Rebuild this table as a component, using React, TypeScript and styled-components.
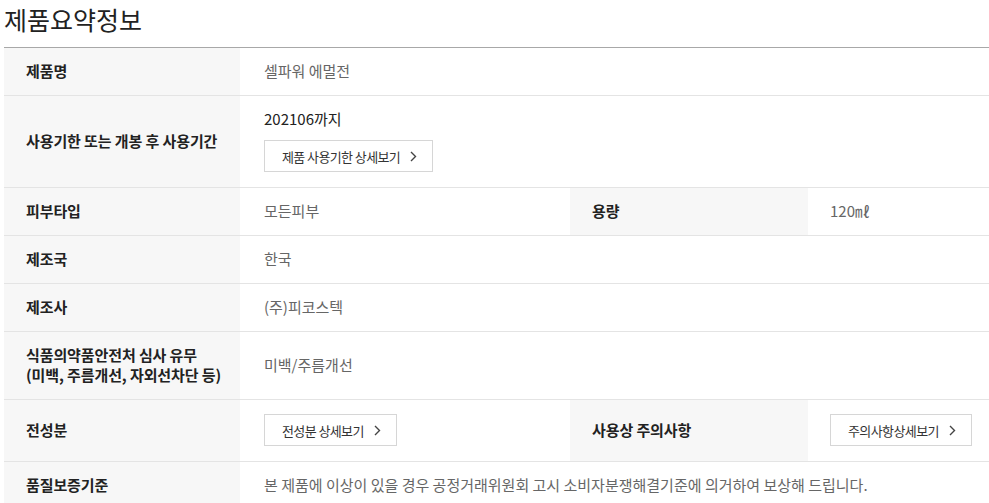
import { createGlobalStyle, styled } from "styled-components"

const GlobalStyle = createGlobalStyle`
  html, body {
    margin: 0;
    padding: 0;
    background: #fff;
  }
  body {
    font-family: "Noto Sans CJK KR", "Noto Sans", sans-serif;
    color: #222;
  }
`

const Page = styled.div`
  padding-left: 4px;
  width: 985px;
`

const Title = styled.h2`
  margin: 0;
  height: 47px;
  font-size: 25px;
  line-height: 38px;
  font-weight: 400;
  color: #222;
`

const Table = styled.table`
  width: 100%;
  border-collapse: collapse;
  table-layout: fixed;
  border-top: 1px solid #a8a8a8;
`

const Row = styled.tr`
  border-bottom: 1px solid #e4e4e4;
`

const Label = styled.th`
  background: #f7f7f7;
  text-align: left;
  vertical-align: middle;
  padding: 13px 10px 14px 22px;
  font-size: 15px;
  line-height: 20px;
  font-weight: 700;
  color: #222;
  letter-spacing: -0.1px;
`

const Value = styled.td<{ $inset?: number }>`
  vertical-align: middle;
  padding: 13px 10px 14px ${(p) => p.$inset ?? 24}px;
  font-size: 15px;
  line-height: 20px;
  color: #666;
`

const Stack = styled.div`
  display: flex;
  flex-direction: column;
  align-items: flex-start;
  gap: 10px;
  color: #222;
`

const DetailButton = styled.button`
  display: inline-flex;
  align-items: center;
  gap: 10px;
  height: 32px;
  margin: 1px 0;
  padding: 0 15px 0 17px;
  border: 1px solid #d6d6d6;
  background: #fff;
  font-family: inherit;
  font-size: 13px;
  color: #333;
  letter-spacing: -0.6px;
  cursor: pointer;

  svg {
    display: block;
  }
`

const Chevron = () => (
  <svg width="7" height="11" viewBox="0 0 7 11">
    <polyline points="1,1 5.5,5.5 1,10" fill="none" stroke="#444" strokeWidth="1.4" />
  </svg>
)

const MoreButton = ({ children }: { children: string }) => (
  <DetailButton type="button">
    {children}
    <Chevron />
  </DetailButton>
)

const App = () => (
  <>
    <GlobalStyle />
    <Page>
      <Title>제품요약정보</Title>
      <Table>
        <colgroup>
          <col style={{ width: 236 }} />
          <col style={{ width: 330 }} />
          <col style={{ width: 238 }} />
          <col />
        </colgroup>
        <tbody>
          <Row>
            <Label>제품명</Label>
            <Value colSpan={3}>셀파워 에멀전</Value>
          </Row>
          <Row>
            <Label>사용기한 또는 개봉 후 사용기간</Label>
            <Value colSpan={3}>
              <Stack>
                <span>202106까지</span>
                <MoreButton>제품 사용기한 상세보기</MoreButton>
              </Stack>
            </Value>
          </Row>
          <Row>
            <Label>피부타입</Label>
            <Value>모든피부</Value>
            <Label>용량</Label>
            <Value $inset={22}>120㎖</Value>
          </Row>
          <Row>
            <Label>제조국</Label>
            <Value colSpan={3}>한국</Value>
          </Row>
          <Row>
            <Label>제조사</Label>
            <Value colSpan={3}>(주)피코스텍</Value>
          </Row>
          <Row>
            <Label>
              식품의약품안전처 심사 유무
              <br />
              (미백, 주름개선, 자외선차단 등)
            </Label>
            <Value colSpan={3}>미백/주름개선</Value>
          </Row>
          <Row>
            <Label>전성분</Label>
            <Value>
              <MoreButton>전성분 상세보기</MoreButton>
            </Value>
            <Label>사용상 주의사항</Label>
            <Value $inset={22}>
              <MoreButton>주의사항상세보기</MoreButton>
            </Value>
          </Row>
          <Row>
            <Label>품질보증기준</Label>
            <Value colSpan={3}>
              본 제품에 이상이 있을 경우 공정거래위원회 고시 소비자분쟁해결기준에 의거하여 보상해 드립니다.
            </Value>
          </Row>
        </tbody>
      </Table>
    </Page>
  </>
)

export default App
